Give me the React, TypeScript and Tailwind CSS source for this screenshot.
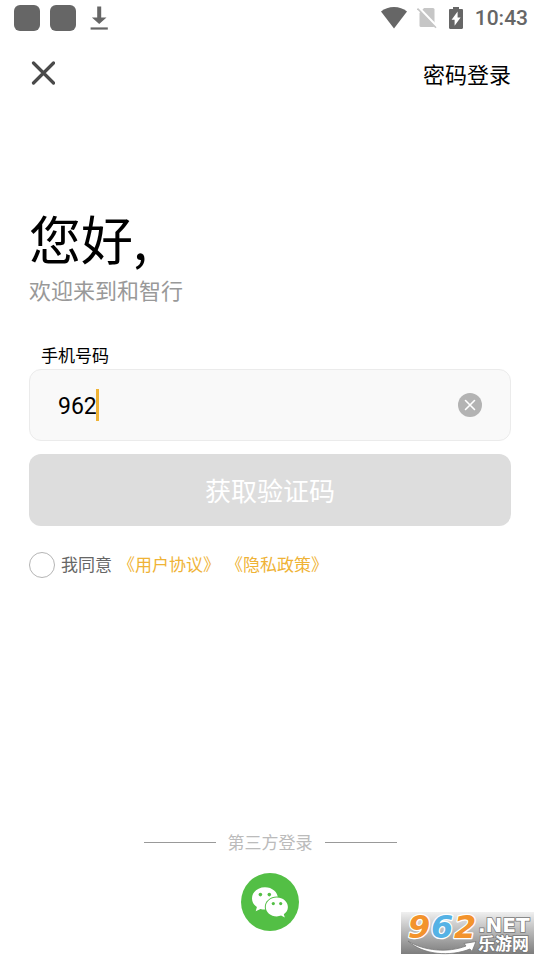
import { useState } from "react";

function StatusBar() {
  return (
    <div className="flex h-9 items-center justify-between pl-[14px] pr-3 text-[#666]">
      <div className="flex items-center gap-[10px]">
        <span className="size-[26px] rounded-[6px] bg-[#666]" />
        <span className="size-[26px] rounded-[6px] bg-[#666]" />
        <svg className="ml-1 h-6 w-[18px]" viewBox="0 0 18 24" fill="currentColor" aria-hidden>
          <path d="M7.2 .5h4v10.900h5.300L9.200 18 1.900 11.400h5.300z" />
          <path d="M.6 21.400h17.200v2.200H.6z" />
        </svg>
      </div>
      <div className="flex items-center gap-[10px]">
        <svg className="h-[22px] w-[26px]" viewBox="0 0 26 22" fill="currentColor" aria-hidden>
          <path d="M13 21.500 0 4.500C3.600 1.700 8 0 13 0s9.400 1.700 13 4.500z" />
        </svg>
        <svg className="h-[22px] w-5" viewBox="0 0 20 22" aria-hidden>
          <path
            d="M7 1h9a1.500 1.500 0 0 1 1.500 1.500v16A1.500 1.500 0 0 1 16 20H4a1.500 1.500 0 0 1-1.500-1.500V6z"
            fill="#c6c6c6"
          />
          <path d="M1.500 .5 20 19.500" stroke="#fff" strokeWidth="2.600" />
          <path d="M.5 1.500 19 20.800" stroke="#c6c6c6" strokeWidth="1.600" />
        </svg>
        <svg className="ml-[2px] h-[22px] w-[14px]" viewBox="0 0 14 22" aria-hidden>
          <path
            d="M4 0h6v2h2.800c.7 0 1.200.5 1.200 1.200v17.600c0 .7-.5 1.200-1.200 1.200H1.200C.5 22 0 21.500 0 20.800V3.200C0 2.500.5 2 1.200 2H4z"
            fill="currentColor"
          />
          <path d="M8.600 4.600v6h3L5.600 18.800v-6H2.600z" fill="#fff" />
        </svg>
        <span className="ml-[2px] font-[Roboto] text-[21px] font-medium leading-6">10:43</span>
      </div>
    </div>
  );
}

function WechatIcon() {
  return (
    <svg className="size-[58px]" viewBox="0 0 58 58" aria-hidden>
      <circle cx="29" cy="29" r="29" fill="#53bf45" />
      <path
        d="M24 14.300c-7.200 0-13 4.900-13 11.100 0 3.600 1.900 6.600 4.900 8.600l-1.200 4.300 4.700-2.400c1.500.4 3 .6 4.600.6 7.200 0 12.900-4.900 12.900-11.100S31.200 14.300 24 14.300z"
        fill="#fff"
      />
      <ellipse cx="35.800" cy="34" rx="12" ry="10.400" fill="#53bf45" />
      <path
        d="M35.800 24.600c6.200 0 11.100 4.200 11.100 9.400 0 3-1.600 5.600-4.100 7.300l1 3.200-3.700-1.900c-1.300.5-2.800.8-4.300.8-6.200 0-11-4.200-11-9.400s4.800-9.400 11-9.400z"
        fill="#fff"
      />
      <g fill="#53bf45">
        <circle cx="19.400" cy="21.600" r="1.800" />
        <circle cx="28.300" cy="21.600" r="1.800" />
        <circle cx="32.300" cy="30.600" r="1.600" />
        <circle cx="39.700" cy="30.600" r="1.600" />
      </g>
    </svg>
  );
}

function SiteBadge() {
  return (
    <div className="absolute bottom-[6px] right-[6px] h-[42px] w-[133px] bg-linear-to-b from-[#f0f0f0] to-[#7e7e7e]">
      <svg className="h-full w-full overflow-visible" viewBox="0 0 133 42" aria-label="962.NET">
        <path
          d="M7 29c16 10 40 12 58 5l-2-2.500 12-2-4 10-2-2.500C49 45 22 43 7 29z"
          fill="#fff"
          stroke="#777"
          strokeWidth=".8"
        />
        <g
          fontFamily="'DejaVu Sans', sans-serif"
          fontSize="32"
          fontWeight="700"
          fontStyle="italic"
          stroke="#fff"
          strokeWidth="2.500"
          paintOrder="stroke"
          strokeLinejoin="round"
        >
          <text x="7" y="26" fill="#f3932c">9</text>
          <text x="30" y="26" fill="#55b2e5">6</text>
          <text x="53" y="26" fill="#f3932c">2</text>
        </g>
        <g fontWeight="700" fill="#fff" stroke="#777" strokeWidth="1.500" paintOrder="stroke">
          <text x="77" y="20" fontFamily="'DejaVu Sans', sans-serif" fontSize="20">
            .NET
          </text>
          <text x="77" y="38" fontFamily="'Noto Sans CJK SC', sans-serif" fontSize="17">
            乐游网
          </text>
        </g>
      </svg>
    </div>
  );
}

export default function App() {
  const [phone, setPhone] = useState("962");
  const [agreed, setAgreed] = useState(false);

  return (
    <div className="relative flex min-h-screen flex-col bg-white font-['Noto_Sans_CJK_SC',sans-serif] text-black">
      <StatusBar />

      <header className="flex h-[74px] items-center justify-between px-[29px]">
        <button type="button" aria-label="关闭" className="p-[2px]">
          <svg className="size-6" viewBox="0 0 24 24" fill="none" stroke="#4a4a4a" strokeWidth="3.200" strokeLinecap="round" aria-hidden>
            <path d="M2.500 2 22.500 22M22.500 2 2.500 22" />
          </svg>
        </button>
        <button type="button" className="text-[22px] leading-8">
          密码登录
        </button>
      </header>

      <main className="px-[29px] pt-24">
        <h1 className="text-[52px] leading-[64px]">您好,</h1>
        <p className="mt-[3px] text-[22px] leading-8 text-[#999]">欢迎来到和智行</p>

        <form className="mt-[38px]" onSubmit={(e) => e.preventDefault()}>
          <label htmlFor="phone" className="block pl-3 text-[17px] leading-6">
            手机号码
          </label>
          <div className="relative mt-[2px] flex h-[72px] items-center rounded-xl border border-[#ebebeb] bg-[#f9f9f9] px-7">
            <input
              id="phone"
              type="tel"
              value={phone}
              onChange={(e) => setPhone(e.target.value)}
              className="min-w-0 flex-1 bg-transparent pt-[3px] font-[Roboto] text-[23px] leading-8 caret-[#efb336] outline-none"
            />
            <span className="absolute left-[66px] top-[19px] h-8 w-[3px] bg-[#efb336]" />
            <button type="button" aria-label="清除" onClick={() => setPhone("")}>
              <svg className="size-6" viewBox="0 0 24 24" aria-hidden>
                <circle cx="12" cy="12" r="12" fill="#b3b3b3" />
                <path d="M7.500 7.500l9 9M16.500 7.500l-9 9" stroke="#fff" strokeWidth="1.600" strokeLinecap="round" />
              </svg>
            </button>
          </div>

          <button type="submit" className="mt-[13px] h-[72px] w-full rounded-xl bg-[#ddd] pb-[2px] text-[26px] text-white">
            获取验证码
          </button>

          <div className="mt-[26px] flex items-center gap-[6px] text-[17px] leading-6">
            <input
              id="agree"
              type="checkbox"
              checked={agreed}
              onChange={(e) => setAgreed(e.target.checked)}
              className="size-[26px] appearance-none rounded-full border border-[#b5b5b5] checked:bg-[#efb336]"
            />
            <label htmlFor="agree" className="pb-[2px] text-[#666]">
              我同意
            </label>
            <a href="#terms" className="pb-[2px] text-[#efb336]">
              《用户协议》
            </a>
            <a href="#privacy" className="pb-[2px] text-[#efb336]">
              《隐私政策》
            </a>
          </div>
        </form>
      </main>

      <footer className="mt-auto flex flex-col items-center pb-[29px]">
        <div className="flex items-center gap-3 text-[17px] leading-6 text-[#bbb]">
          <span className="h-px w-[72px] bg-[#999]" />
          第三方登录
          <span className="h-px w-[72px] bg-[#999]" />
        </div>
        <button type="button" aria-label="微信登录" className="mt-[19px]">
          <WechatIcon />
        </button>
      </footer>

      <SiteBadge />
    </div>
  );
}
